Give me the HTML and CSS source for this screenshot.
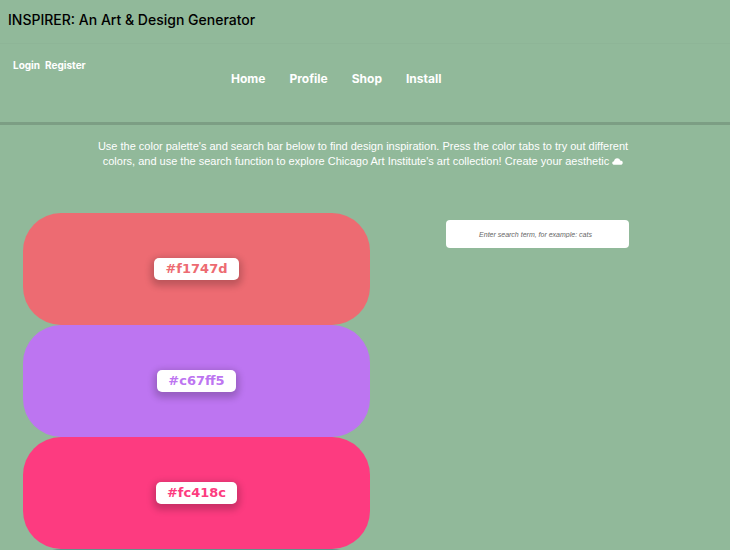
FILE: index.html
```html
<!DOCTYPE html>
<html lang="en">
<head>
<meta charset="utf-8">
<meta name="viewport" content="width=device-width, initial-scale=1">
<title>INSPIRER</title>
<link rel="stylesheet" href="styles.css">
</head>
<body>
<header class="banner"><h1>INSPIRER: An Art &amp; Design Generator</h1></header>
<div class="topbar">
  <div class="account"><a href="#login">Login</a><a href="#register">Register</a></div>
  <nav class="menu">
    <a href="#home">Home</a>
    <a href="#profile">Profile</a>
    <a href="#shop">Shop</a>
    <a href="#install">Install</a>
  </nav>
</div>
<main>
  <p class="intro">Use the color palette's and search bar below to find design inspiration. Press the color tabs to try out different colors, and use the search function to explore Chicago Art Institute's art collection! Create your aesthetic <svg class="cloud" viewBox="0 0 22 14" aria-hidden="true"><path d="M5 13.5C2.200 13.500 .500 12 .500 9.800C.500 7.800 2 6.500 4 6.300C4.600 2.800 7 .500 10.300 .500C13.300 .500 15.600 2.300 16.400 5C19.500 5 21.500 6.800 21.500 9.300C21.500 11.800 19.700 13.500 17 13.500Z"/></svg></p>
  <div class="workspace">
    <section class="palette">
      <div class="swatch coral"><button type="button">#f1747d</button></div>
      <div class="swatch violet"><button type="button">#c67ff5</button></div>
      <div class="swatch pink"><button type="button">#fc418c</button></div>
      <div class="swatch teal"></div>
    </section>
    <form class="search">
      <input type="text" aria-label="Search term" placeholder="Enter search term, for example: cats">
    </form>
  </div>
</main>
</body>
</html>
```

FILE: styles.css
```css
* { box-sizing: border-box; }

body {
  margin: 0;
  height: 100vh;
  overflow: hidden;
  background: #91b99a;
  color: #fff;
  font-family: "Liberation Sans", Arial, sans-serif;
}

a { color: inherit; text-decoration: none; }

.banner {
  padding: 10px 8px 13px;
  border-bottom: 1px solid #8eb597;
}

.banner h1 {
  margin: 0;
  color: #000;
  font: 500 14px/20px Inter, sans-serif;
}

.topbar {
  display: grid;
  grid-template-columns: 218px 1fr;
  align-items: start;
  height: 81px;
  padding: 12px 13px;
  border-bottom: 3px solid #7c9e84;
  font-family: Inter, sans-serif;
  font-weight: 700;
}

.account {
  display: flex;
  gap: 5px;
  font-size: 10px;
  line-height: 18px;
}

.menu {
  display: flex;
  gap: 24px;
  padding-top: 13px;
  font-size: 12px;
  line-height: 20px;
}

.intro {
  max-width: 544px;
  margin: 14px auto 0;
  padding-right: 4px;
  font-size: 11px;
  line-height: 15px;
  text-align: center;
}

.cloud {
  width: 11px;
  height: 7px;
  fill: #fff;
}

.workspace {
  display: grid;
  grid-template-columns: 347fr 183fr;
  column-gap: 76px;
  align-items: start;
  margin-top: 44px;
  padding: 0 101px 0 23px;
}

.swatch {
  display: flex;
  align-items: center;
  justify-content: center;
  height: 112px;
  border-radius: 38px;
}

.coral { background: #ed6b72; color: #ed6b72; }
.violet { background: #bd75f1; color: #bd75f1; }
.pink { background: #fd3b80; color: #fd3b80; }
.teal { background: #5f958c; }

.swatch button {
  height: 22px;
  padding: 0 11px;
  border: 0;
  border-radius: 5px;
  background: #fff;
  color: inherit;
  font: bold 13px/22px "DejaVu Sans", Verdana, sans-serif;
  box-shadow: 0 3px 7px 3px rgb(0 0 0 / 20%);
}

.search { padding-top: 7px; }

.search input {
  display: block;
  width: 100%;
  height: 28px;
  padding: 0 12px 0 8px;
  border: 0;
  border-radius: 4px;
  background: #fff;
  color: #555;
  font: italic 7px "Liberation Sans", Arial, sans-serif;
  text-align: center;
}

.search input::placeholder { color: #666; }
```
